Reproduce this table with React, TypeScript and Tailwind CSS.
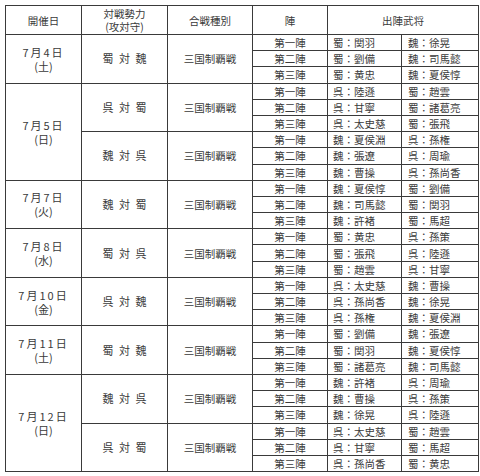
import React from "react"

type Match = { vs: string; lineup: [string, string][] }
type Day = { date: string; day: string; matches: Match[] }

const jin = ["第一陣", "第二陣", "第三陣"]

const schedule: Day[] = [
    {
        date: "7月4日",
        day: "土",
        matches: [
            { vs: "蜀 対 魏", lineup: [["蜀：関羽", "魏：徐晃"], ["蜀：劉備", "魏：司馬懿"], ["蜀：黄忠", "魏：夏侯惇"]] },
        ],
    },
    {
        date: "7月5日",
        day: "日",
        matches: [
            { vs: "呉 対 蜀", lineup: [["呉：陸遜", "蜀：趙雲"], ["呉：甘寧", "蜀：諸葛亮"], ["呉：太史慈", "蜀：張飛"]] },
            { vs: "魏 対 呉", lineup: [["魏：夏侯淵", "呉：孫権"], ["魏：張遼", "呉：周瑜"], ["魏：曹操", "呉：孫尚香"]] },
        ],
    },
    {
        date: "7月7日",
        day: "火",
        matches: [
            { vs: "魏 対 蜀", lineup: [["魏：夏侯惇", "蜀：劉備"], ["魏：司馬懿", "蜀：関羽"], ["魏：許褚", "蜀：馬超"]] },
        ],
    },
    {
        date: "7月8日",
        day: "水",
        matches: [
            { vs: "蜀 対 呉", lineup: [["蜀：黄忠", "呉：孫策"], ["蜀：張飛", "呉：陸遜"], ["蜀：趙雲", "呉：甘寧"]] },
        ],
    },
    {
        date: "7月10日",
        day: "金",
        matches: [
            { vs: "呉 対 魏", lineup: [["呉：太史慈", "魏：曹操"], ["呉：孫尚香", "魏：徐晃"], ["呉：孫権", "魏：夏侯淵"]] },
        ],
    },
    {
        date: "7月11日",
        day: "土",
        matches: [
            { vs: "蜀 対 魏", lineup: [["蜀：劉備", "魏：張遼"], ["蜀：関羽", "魏：夏侯惇"], ["蜀：諸葛亮", "魏：司馬懿"]] },
        ],
    },
    {
        date: "7月12日",
        day: "日",
        matches: [
            { vs: "魏 対 呉", lineup: [["魏：許褚", "呉：周瑜"], ["魏：曹操", "呉：孫策"], ["魏：徐晃", "呉：陸遜"]] },
            { vs: "呉 対 蜀", lineup: [["呉：太史慈", "蜀：趙雲"], ["呉：甘寧", "蜀：馬超"], ["呉：孫尚香", "蜀：黄忠"]] },
        ],
    },
]

const cell = "border border-[#3a3a3a] p-0 align-middle"

export default function App() {
    return (
        <div className="h-[476px] w-[480px] overflow-hidden bg-white pl-[5px] pt-[5px] font-['Noto_Sans_CJK_JP',sans-serif] text-[10.5px] leading-[13px] text-[#3a3a3a]">
            <table className="w-[473px] table-fixed border-collapse">
                <colgroup>
                    <col className="w-[76px]" />
                    <col className="w-[86px]" />
                    <col className="w-[85px]" />
                    <col className="w-[75px]" />
                    <col className="w-[74px]" />
                    <col className="w-[77px]" />
                </colgroup>
                <thead>
                    <tr className="h-[29px]">
                        <th className={`${cell} font-normal`}>開催日</th>
                        <th className={`${cell} font-normal leading-[13px]`}>
                            <div>対戦勢力</div>
                            <div>(攻対守)</div>
                        </th>
                        <th className={`${cell} font-normal`}>合戦種別</th>
                        <th className={`${cell} font-normal`}>陣</th>
                        <th colSpan={2} className={`${cell} font-normal`}>
                            出陣武将
                        </th>
                    </tr>
                </thead>
                <tbody>
                    {schedule.map((d) =>
                        d.matches.map((m, mi) =>
                            m.lineup.map((pair, i) => (
                                <tr key={`${d.date}-${mi}-${i}`} className="h-[16.2px]">
                                    {mi === 0 && i === 0 && (
                                        <td rowSpan={d.matches.length * 3} className={`${cell} text-center text-[11px] leading-[14px]`}>
                                            <div className="tracking-[2px]">{d.date}</div>
                                            <div>({d.day})</div>
                                        </td>
                                    )}
                                    {i === 0 && (
                                        <td rowSpan={3} className={`${cell} text-center text-[11px] [word-spacing:3px]`}>
                                            {m.vs}
                                        </td>
                                    )}
                                    {i === 0 && (
                                        <td rowSpan={3} className={`${cell} text-center`}>
                                            三国制覇戦
                                        </td>
                                    )}
                                    <td className={`${cell} text-center leading-[15px]`}>{jin[i]}</td>
                                    <td className={`${cell} pl-[5px] leading-[15px]`}>{pair[0]}</td>
                                    <td className={`${cell} pl-[6px] leading-[15px]`}>{pair[1]}</td>
                                </tr>
                            ))
                        )
                    )}
                </tbody>
            </table>
            <p className="mt-[3px] whitespace-nowrap text-[10px]">
                ※　上記日程の変更に関しては、本国における状況により変更となる場合がございます。
            </p>
        </div>
    )
}
